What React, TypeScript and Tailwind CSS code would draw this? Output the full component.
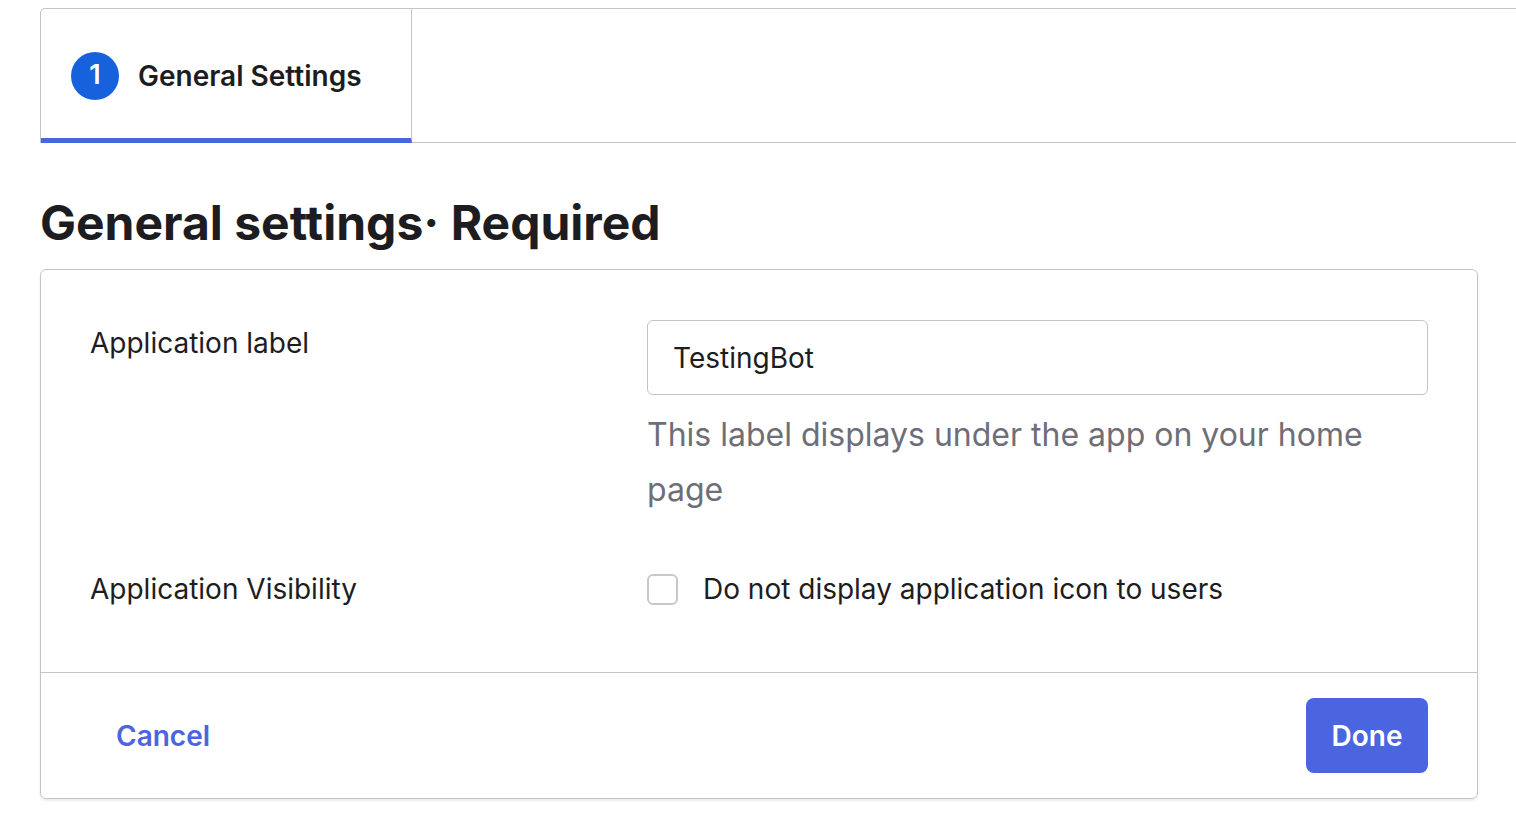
import React from 'react';

const font = { fontFamily: 'Inter, "Noto Sans", sans-serif' };

function Tabs() {
  return (
    <div className="ml-[40px] mt-[8px] flex h-[135px] rounded-tl-[5px] border-l border-t border-[#c4c4c4]">
      <div className="flex w-[371px] items-center gap-[19px] border-b-[5px] border-r border-b-[#4b64e0] border-r-[#c4c4c4] pl-[30px] pt-[4px]">
        <div className="flex h-[48px] w-[48px] items-center justify-center rounded-full bg-[#1662dd] text-[27px] font-semibold text-white">
          1
        </div>
        <span className="text-[28px] font-semibold text-[#1d1d21]">General Settings</span>
      </div>
      <div className="flex-1 border-b border-[#c4c4c4]" />
    </div>
  );
}

export default function App() {
  return (
    <div className="min-h-screen bg-white" style={font}>
      <Tabs />
      <h1 className="ml-[40px] mt-[51px] text-[48px] font-bold leading-[58px] text-[#1d1d21]">
        General settings· Required
      </h1>
      <div className="ml-[40px] mt-[17px] w-[1438px] rounded-[6px] border border-[#c4c4c4] shadow-[0_2px_3px_rgba(0,0,0,0.08)]">
        <div className="grid grid-cols-[557px_1fr] px-[49px] pt-[50px] pb-[66px]">
          <div className="pt-[6px] text-[28px] leading-[34px] text-[#1d1d21]">Application label</div>
          <div>
            <div className="flex h-[75px] items-center rounded-[6px] border border-[#c4c4c4] px-[25px] text-[28px] text-[#1d1d21]">
              TestingBot
            </div>
            <p className="mt-[12px] text-[32px] leading-[55px] text-[#6e6e78]">
              This label displays under the app on your home page
            </p>
          </div>
          <div className="mt-[55px] text-[28px] leading-[34px] text-[#1d1d21]">Application Visibility</div>
          <div className="mt-[55px] flex items-center gap-[25px]">
            <div className="h-[31px] w-[31px] rounded-[6px] border-[2.5px] border-[#c8c8c8]" />
            <span className="text-[28px] leading-[34px] text-[#1d1d21]">Do not display application icon to users</span>
          </div>
        </div>
        <div className="flex items-center justify-between border-t border-[#c4c4c4] px-[49px] py-[25px]">
          <button className="px-[26px] text-[28px] font-semibold text-[#4b64e0]">Cancel</button>
          <button className="h-[75px] w-[122px] rounded-[8px] bg-[#4b64e0] text-[28px] font-semibold text-white">Done</button>
        </div>
      </div>
    </div>
  );
}
